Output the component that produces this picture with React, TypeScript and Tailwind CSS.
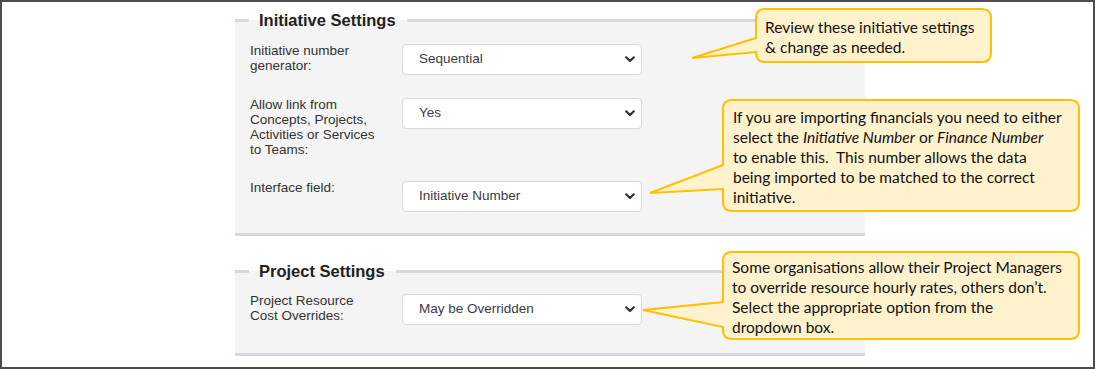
import React from "react";

const LINE = "bg-[#d3d9de]";

function Chevron() {
  return (
    <svg width="10" height="7" viewBox="0 0 10 7" className="shrink-0">
      <path d="M1.2 1.3 L5 5 L8.8 1.3" fill="none" stroke="#333" strokeWidth="2.2" strokeLinecap="round" strokeLinejoin="round" />
    </svg>
  );
}

function Select({ value }: { value: string }) {
  return (
    <div className="h-[31px] w-[240px] shrink-0 border border-[#d9d9d9] rounded-[4px] bg-white pl-[16px] pr-[6px] flex items-center justify-between text-[13.5px] text-[#3b3b48]">
      <span>{value}</span>
      <Chevron />
    </div>
  );
}

function Header({ title }: { title: string }) {
  return (
    <div className="flex items-center h-[20px] bg-[linear-gradient(to_bottom,#ffffff_50%,#f4f4f4_50%)]">
      <div className={`w-[14px] h-[3px] ${LINE}`} />
      <span className="pl-[10px] pr-[11px] text-[16.5px] leading-[20px] font-bold text-[#222]">{title}</span>
      <div className={`flex-1 h-[3px] ${LINE}`} />
    </div>
  );
}

function Row({ label, value, className = "" }: { label: React.ReactNode; value: string; className?: string }) {
  return (
    <div className={`flex items-start ${className}`}>
      <div className="w-[152px] -mt-[1px] text-[13.5px] leading-[15px] text-[#333] whitespace-nowrap">{label}</div>
      <Select value={value} />
    </div>
  );
}

function Callout({
  left, top, w, h, tx, ty, y1, y2, pt, pl, children,
}: {
  left: number; top: number; w: number; h: number; tx: number; ty: number; y1: number; y2: number; pt: number; pl: number; children: React.ReactNode;
}) {
  const r = 10;
  const d = `M ${r} 1 H ${w - r} Q ${w - 1} 1 ${w - 1} ${r} V ${h - r} Q ${w - 1} ${h - 1} ${w - r} ${h - 1} H ${r} Q 1 ${h - 1} 1 ${h - r} V ${y2} L ${tx} ${ty} L 1 ${y1} V ${r} Q 1 1 ${r} 1 Z`;
  return (
    <div className="absolute" style={{ left, top, width: w, height: h }}>
      <svg className="absolute left-0 top-0 overflow-visible" width={w} height={h}>
        <path d={d} fill="#fff2cc" stroke="#ffc000" strokeWidth="2" strokeLinejoin="miter" />
      </svg>
      <div
        className="relative text-[15.5px] leading-[20px] text-[#111] whitespace-pre font-['Lato',sans-serif]"
        style={{ paddingTop: pt, paddingLeft: pl }}
      >
        {children}
      </div>
    </div>
  );
}

export default function App() {
  return (
    <div className="relative w-[1095px] h-[369px] border-2 border-[#4d4d4d] bg-white overflow-hidden font-['Liberation_Sans',Arial,sans-serif]">
      <div className="ml-[233px] w-[630px] pt-[8px]">
        <section>
          <Header title="Initiative Settings" />
          <div className={`bg-[#f4f4f4] px-[15px] pt-[14px] pb-[21px] border-b-[3px] border-[#d3d9de]`}>
            <Row label={<>Initiative number<br />generator:</>} value="Sequential" />
            <Row
              className="mt-[23px]"
              label={<>Allow link from<br />Concepts, Projects,<br />Activities or Services<br />to Teams:</>}
              value="Yes"
            />
            <Row className="mt-[24px]" label="Interface field:" value="Initiative Number" />
          </div>
        </section>
        <section className="mt-[25px]">
          <Header title="Project Settings" />
          <div className={`bg-[#f4f4f4] px-[15px] pt-[13px] pb-[28px] border-b-[3px] border-[#d3d9de]`}>
            <Row label={<>Project Resource<br />Cost Overrides:</>} value="May be Overridden" />
          </div>
        </section>
      </div>

      <Callout left={753} top={6} w={237} h={55} tx={-63} ty={50} y1={30} y2={44} pt={9} pl={10}>
        {"Review these initiative settings\n& change as needed."}
      </Callout>
      <Callout left={720} top={97} w={358} h={113} tx={-72} ty={94} y1={66} y2={90} pt={8} pl={11}>
        <span>{"If you are importing financials you need to either\nselect the "}<i>Initiative Number</i>{" or "}<i>Finance Number</i>{"\nto enable this.  This number allows the data\nbeing imported to be matched to the correct\ninitiative."}</span>
      </Callout>
      <Callout left={720} top={249} w={358} h={89} tx={-79} ty={59} y1={51} y2={76} pt={6} pl={10}>
        {"Some organisations allow their Project Managers\nto override resource hourly rates, others don\u2019t.\nSelect the appropriate option from the\ndropdown box."}
      </Callout>
    </div>
  );
}
